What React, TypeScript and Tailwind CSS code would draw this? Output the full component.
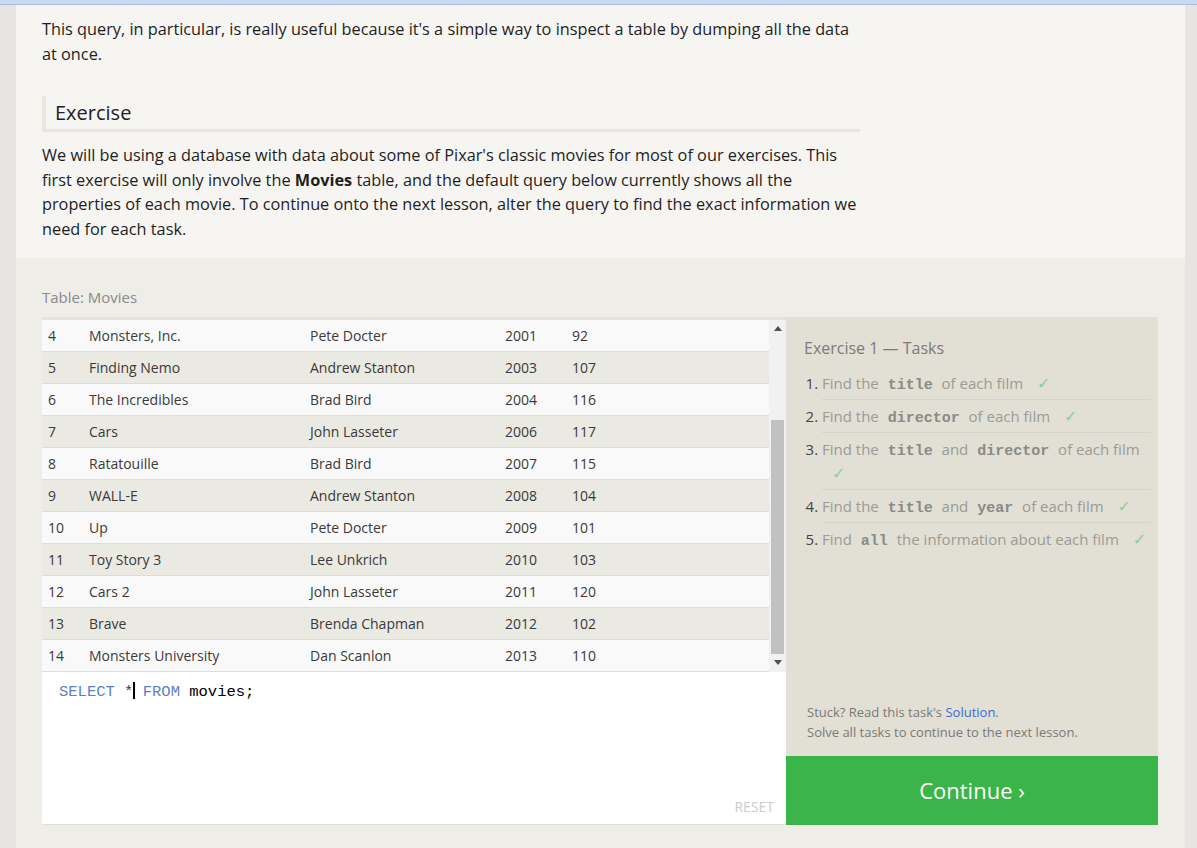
import React from "react";

const rows: [number, string, string, number, number][] = [
  [4, "Monsters, Inc.", "Pete Docter", 2001, 92],
  [5, "Finding Nemo", "Andrew Stanton", 2003, 107],
  [6, "The Incredibles", "Brad Bird", 2004, 116],
  [7, "Cars", "John Lasseter", 2006, 117],
  [8, "Ratatouille", "Brad Bird", 2007, 115],
  [9, "WALL-E", "Andrew Stanton", 2008, 104],
  [10, "Up", "Pete Docter", 2009, 101],
  [11, "Toy Story 3", "Lee Unkrich", 2010, 103],
  [12, "Cars 2", "John Lasseter", 2011, 120],
  [13, "Brave", "Brenda Chapman", 2012, 102],
  [14, "Monsters University", "Dan Scanlon", 2013, 110],
];

function Code({ children }: { children: React.ReactNode }) {
  return (
    <code className="font-['Liberation_Mono',monospace] font-bold text-[#8a8a86] px-[5px] leading-none">
      {children}
    </code>
  );
}

function Check() {
  return (
    <span className="inline-block ml-[10px] text-[#8ccf98] font-['DejaVu_Sans',sans-serif] text-[16px] leading-none">
      ✓
    </span>
  );
}

export default function App() {
  return (
    <div className="w-[1197px] h-[848px] overflow-hidden bg-[#e7e5e1] font-['Open_Sans',sans-serif]">
      <div className="h-[5px] bg-[#c9daf1] border-b border-[#a9bcd8]" />
      <div className="ml-[16px] w-[1169px] h-[843px] flex flex-col">
        <div className="bg-[#f6f5f2] pl-[26px] pt-[12px] pb-[16px]">
          <div className="w-[818px] text-[#1e1e1e]">
            <p className="w-[820px] text-[16.3px] leading-[25px]">
              This query, in particular, is really useful because it's a simple way to inspect a table by dumping all the data at once.
            </p>
            <h3 className="mt-[29px] h-[36px] border-l-[4px] border-b-[3px] border-[#e8e6de] pl-[9px] text-[20px] leading-[33px] text-[#222]">
              Exercise
            </h3>
            <p className="w-[820px] mt-[11px] text-[16.3px] leading-[24.7px]">
              We will be using a database with data about some of Pixar's classic movies for most of our exercises. This first exercise will only involve the <b className="font-bold">Movies</b> table, and the default query below currently shows all the properties of each movie. To continue onto the next lesson, alter the query to find the exact information we need for each task.
            </p>
          </div>
        </div>
        <div className="flex-1 bg-[#efede7] pl-[26px] pt-[29px]">
          <div className="text-[15px] leading-[20px] text-[#8a8a8a]">Table: Movies</div>
          <div className="mt-[10px] flex w-[1116px]">
            <div className="w-[744px] flex flex-col">
              <div className="h-[355px] border-t-[3px] border-[#e4e2db] flex">
                <div className="w-[727px]">
                  {rows.map((r, i) => (
                    <div
                      key={r[0]}
                      className={`h-[32px] flex items-center border-b border-[#dedcd5] text-[14px] text-[#3a3a3a] ${i % 2 === 0 ? "bg-[#f9f9f9]" : "bg-[#eae9e2]"}`}
                    >
                      <div className="w-[47px] pl-[6px]">{r[0]}</div>
                      <div className="w-[221px]">{r[1]}</div>
                      <div className="w-[195px]">{r[2]}</div>
                      <div className="w-[67px]">{r[3]}</div>
                      <div className="flex-1">{r[4]}</div>
                    </div>
                  ))}
                </div>
                <div className="w-[17px] bg-[#f1f1f1] flex flex-col items-center">
                  <div className="h-[17px] flex items-center justify-center">
                    <svg width="8" height="5" viewBox="0 0 8 5"><path d="M0 5 L4 0 L8 5 Z" fill="#505050" /></svg>
                  </div>
                  <div className="mt-[83px] w-[13px] h-[234px] bg-[#c1c1c1]" />
                  <div className="h-[17px] flex items-center justify-center">
                    <svg width="8" height="5" viewBox="0 0 8 5"><path d="M0 0 L8 0 L4 5 Z" fill="#505050" /></svg>
                  </div>
                </div>
              </div>
              <div className="h-[153px] bg-white border-b border-[#e2dfd7] flex flex-col">
                <div className="pl-[17px] pt-[10px] font-['Liberation_Mono',monospace] text-[15.5px] leading-[20px] whitespace-pre">
                  <span className="text-[#5d7fc4]">SELECT</span>
                  <span className="text-[#2a3a66]"> *</span>
                  <span className="inline-block w-[2px] h-[17px] -mr-[2px] bg-black align-[-3px]" />
                  <span className="text-[#5d7fc4]"> FROM</span>
                  <span className="text-black"> movies;</span>
                </div>
                <div className="mt-auto self-end pr-[12px] pb-[8px] text-[14px] leading-[18px] text-[#cbcbcb]">RESET</div>
              </div>
            </div>
            <div className="w-[372px] flex flex-col">
              <div className="h-[439px] bg-[#e2dfd4] pl-[18px] pr-[7px] pt-[19px] pb-[14px] flex flex-col">
                <div className="text-[16px] leading-[24px] text-[#7b7b7b]">Exercise 1 — Tasks</div>
                <ol className="mt-[7px] ml-[18px] list-decimal list-outside text-[15px] leading-[24px] text-[#9b9b97] marker:text-[#444]">
                  <li className="py-[4px] border-b border-[#d6d3c8]">
                    Find the <Code>title</Code> of each film <Check />
                  </li>
                  <li className="py-[4px] border-b border-[#d6d3c8]">
                    Find the <Code>director</Code> of each film <Check />
                  </li>
                  <li className="py-[4px] border-b border-[#d6d3c8]">
                    Find the <Code>title</Code> and <Code>director</Code> of each film <Check />
                  </li>
                  <li className="py-[4px] border-b border-[#d6d3c8]">
                    Find the <Code>title</Code> and <Code>year</Code> of each film <Check />
                  </li>
                  <li className="py-[4px]">
                    Find <Code>all</Code> the information about each film <Check />
                  </li>
                </ol>
                <div className="mt-auto pl-[3px] text-[13px] leading-[20px] text-[#7a7a7a]">
                  <div>
                    Stuck? Read this task's <span className="text-[#3a6ad4]">Solution</span>.
                  </div>
                  <div>Solve all tasks to continue to the next lesson.</div>
                </div>
              </div>
              <div className="h-[69px] bg-[#3bb54a] flex items-center justify-center text-white text-[22px]">
                Continue ›
              </div>
            </div>
          </div>
        </div>
      </div>
    </div>
  );
}
